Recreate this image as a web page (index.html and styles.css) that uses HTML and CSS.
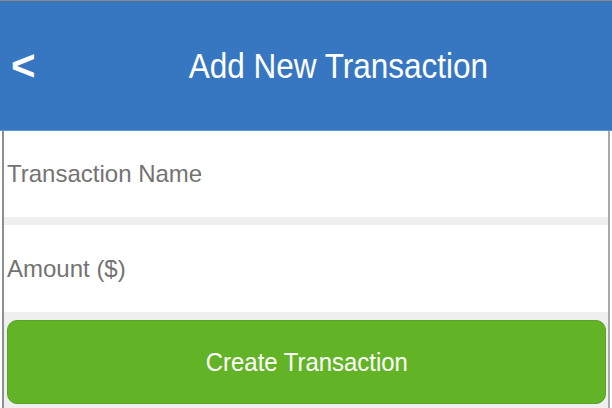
FILE: index.html
```html
<!DOCTYPE html>
<html lang="en">
<head>
<meta charset="utf-8">
<title>Add New Transaction</title>
<link rel="stylesheet" href="styles.css">
</head>
<body>
<header class="topbar">
  <button class="back" type="button" aria-label="Back">&lt;</button>
  <h1 class="title"><span class="title-text">Add New Transaction</span></h1>
</header>
<main class="panel">
  <form class="form">
    <div class="field"><input class="input" type="text" placeholder="Transaction Name"></div>
    <div class="field"><input class="input" type="text" placeholder="Amount ($)"></div>
    <div class="actions"><button class="submit" type="button"><span class="submit-text">Create Transaction</span></button></div>
  </form>
</main>
</body>
</html>
```
FILE: styles.css
```css
* { box-sizing: border-box; }
html, body { margin: 0; padding: 0; background: #ffffff; }
body {
  font-family: "Liberation Sans", Arial, sans-serif;
  width: 612px;
  height: 408px;
  overflow: hidden;
}
.topbar {
  display: flex;
  align-items: center;
  height: 131px;
  background: #3777c2;
  border-top: 1px solid #8d8a86;
  border-bottom: 1px solid #5b95d6;
}
.back {
  width: 64px;
  padding: 0 0 0 11px;
  margin: 0;
  border: 0;
  background: transparent;
  color: #ffffff;
  font-family: "Liberation Sans", Arial, sans-serif;
  font-size: 42px;
  font-weight: bold;
  text-align: left;
  line-height: 1;
}
.title {
  flex: 1;
  margin: 0;
  text-align: center;
  color: #ffffff;
  font-size: 35px;
  font-weight: normal;
  line-height: 1;
}
.title-text {
  display: inline-block;
  transform: scaleX(0.9);
}
.panel {
  margin: 0 2px;
  height: 277px;
  border-left: 2px solid #8f8f8f;
  border-right: 2px solid #a9a9a9;
  background: #efefef;
}
.form {
  display: flex;
  flex-direction: column;
  gap: 8px;
}
.field {
  height: 86px;
  background: #ffffff;
}
.field + .field { height: 87px; }
.input {
  display: block;
  width: 100%;
  height: 100%;
  border: 0;
  padding: 0 0 0 3px;
  background: transparent;
  font-family: "Liberation Sans", Arial, sans-serif;
  font-size: 24px;
  color: #333333;
  outline: none;
}
.input::placeholder { color: #737373; opacity: 1; }
.actions {
  padding: 0 2px 0 3px;
}
.submit {
  display: block;
  width: 100%;
  height: 84px;
  border: 1px solid #5aa228;
  border-radius: 10px;
  background: #62b426;
  color: #ffffff;
  font-family: "Liberation Sans", Arial, sans-serif;
  font-size: 26px;
  line-height: 1;
}
.submit-text {
  display: inline-block;
  transform: scaleX(0.92);
}
```
